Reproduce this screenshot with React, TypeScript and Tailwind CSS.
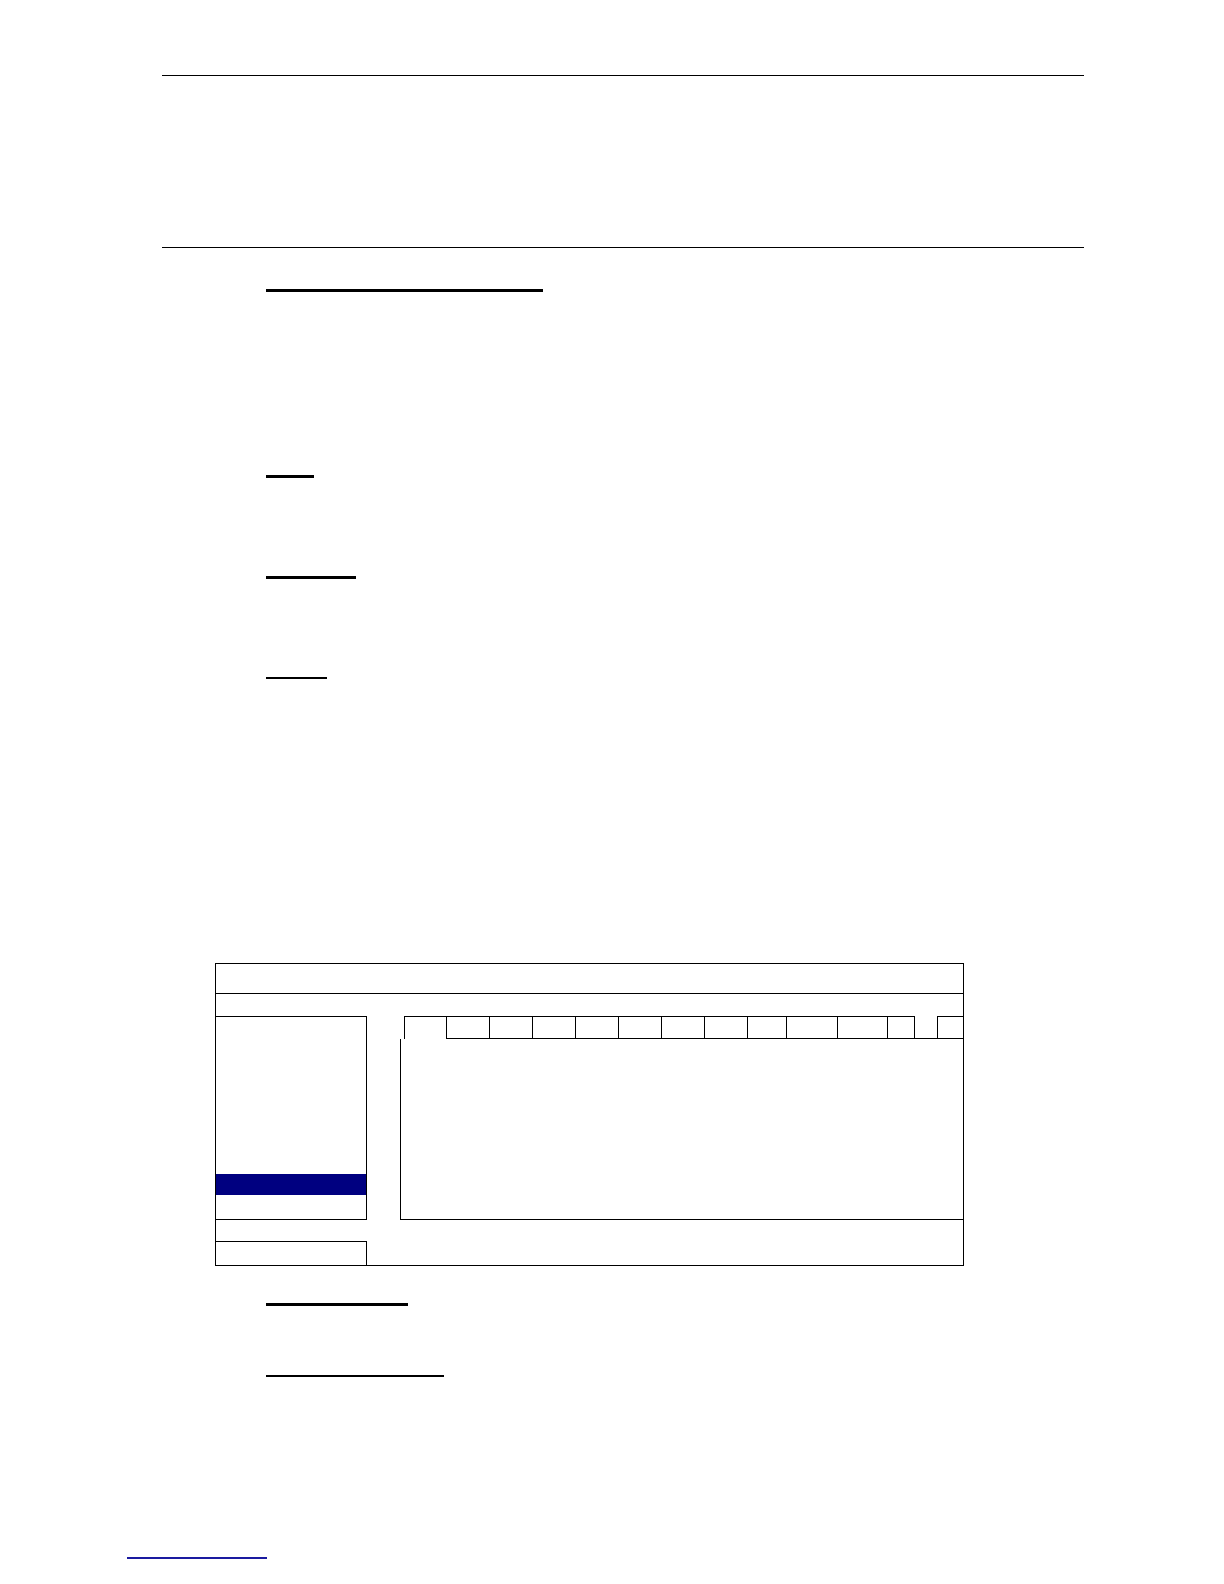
import React from 'react'

// widths of the tab cells, left to right (px)
const tabWidths = [43, 43, 43, 43, 43, 43, 43, 39, 51, 50, 27]

function Underline({ w, h, mt }: { w: string; h: string; mt: string }) {
    return <div className={`ml-[266px] bg-black shrink-0 ${w} ${h} ${mt}`} />
}

function MenuBox() {
    return (
        <div className="ml-[215px] mt-[284px] w-[749px] h-[303px] border border-black flex flex-col shrink-0">
            <div className="h-[30px] border-b border-black shrink-0" />
            <div className="h-[22px] shrink-0" />
            <div className="flex h-[204px] shrink-0">
                <div className="w-[151px] border-y border-r border-black flex flex-col">
                    <div className="h-[157px]" />
                    <div className="h-[21px] bg-[#000080]" />
                </div>
                <div className="w-[33px]" />
                <div className="flex-1 flex flex-col">
                    <div className="h-[23px] flex shrink-0">
                        <div className="w-[4px]" />
                        <div className="w-[42px] border-t border-l border-black" />
                        {tabWidths.map((w, i) => (
                            <div
                                key={i}
                                style={{ width: w }}
                                className="border-t border-b border-l border-black"
                            />
                        ))}
                        <div className="w-[23px] border-b border-l border-black" />
                        <div className="flex-1 border-t border-b border-l border-black" />
                    </div>
                    <div className="flex-1 border-l border-b border-black" />
                </div>
            </div>
            <div className="flex-1 flex flex-col">
                <div className="h-[21px]" />
                <div className="w-[151px] flex-1 border-t border-r border-black" />
            </div>
        </div>
    )
}

export default function App() {
    return (
        <div className="w-full h-[1584px] overflow-hidden bg-white flex flex-col font-['Liberation_Sans',sans-serif]">
            <div className="ml-[162px] mt-[75px] w-[922px] h-[173px] border-y-[1.5px] border-black shrink-0" />
            <Underline w="w-[277px]" h="h-[3px]" mt="mt-[41px]" />
            <Underline w="w-[48px]" h="h-[3px]" mt="mt-[183px]" />
            <Underline w="w-[90px]" h="h-[3px]" mt="mt-[98px]" />
            <Underline w="w-[61px]" h="h-[2px]" mt="mt-[98px]" />
            <MenuBox />
            <Underline w="w-[142px]" h="h-[3px]" mt="mt-[37px]" />
            <Underline w="w-[178px]" h="h-[2px]" mt="mt-[69px]" />
            <div className="ml-[127px] mt-[180px] w-[140px] h-[2px] bg-[#1a1aa0] shrink-0" />
        </div>
    )
}
